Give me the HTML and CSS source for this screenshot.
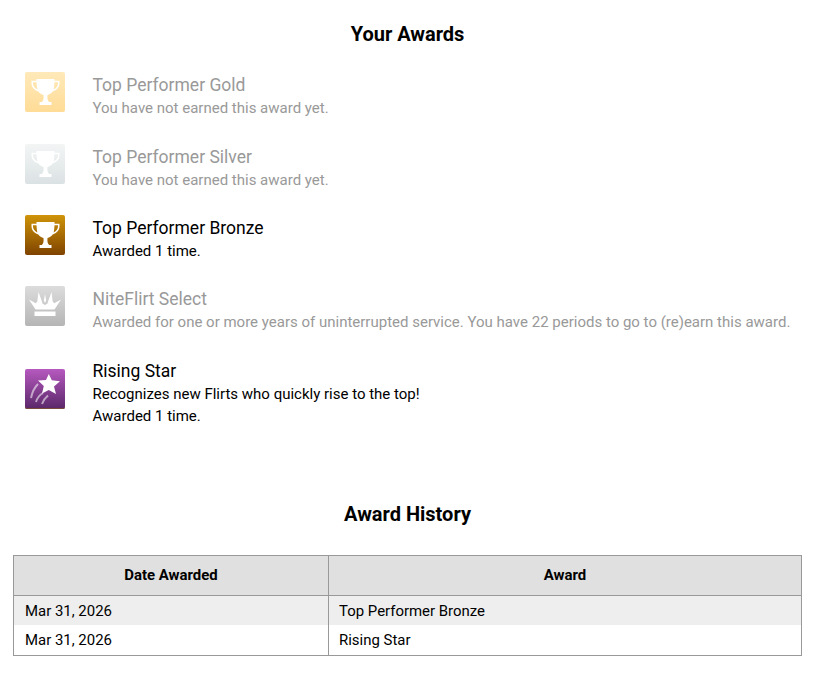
FILE: index.html
```html
<!DOCTYPE html>
<html lang="en">
<head>
<meta charset="utf-8">
<title>Your Awards</title>
<link rel="stylesheet" href="styles.css">
</head>
<body>
<svg class="defs" width="0" height="0" aria-hidden="true">
  <symbol id="trophy" viewBox="0 0 40 40">
    <path fill="#fff" fill-rule="evenodd" d="M11.500 7h18v1.800h5v2.400c0 3.600-2.100 6.300-6.800 8.300-1.400 2-3.200 3-5.200 3.400-.3 3.200 0 5.600 1.700 7.100h2.300v3H14.500v-3h2.300c1.700-1.500 2-3.900 1.700-7.100-2-.4-3.800-1.400-5.200-3.400-4.700-2-6.800-4.700-6.800-8.300V8.800h5zM8 10.300v1c0 2.700 1.500 4.700 4.300 6.200-.4-2.100-.7-4.600-.8-7.200zm25 0h-3.500c-.1 2.600-.4 5.100-.8 7.200 2.800-1.500 4.300-3.500 4.300-6.200z"/>
  </symbol>
  <symbol id="crown" viewBox="0 0 40 40">
    <path fill="#fff" d="M9.500 25.500h21V30h-21zM10.500 23.500 4 13.500l6.800 3.700 1.500-1.700L13.500 6l3.200 8.800.8 2.700L20 19l2.500-1.500.8-2.700L26.500 6l1.200 9.500 1.500 1.700 6.800-3.700-6.500 10zM18.800 14.500 20 8l1.200 6.500-1.200 2.500z"/>
  </symbol>
  <symbol id="star" viewBox="0 0 40 40">
    <path fill="#fff" d="M23.800 5l3 6.300 8.200.9-6 5.300 2 7.500-7.200-3.900-6.800 3.400 1.800-7.500-5.800-5.500 8-.5z"/>
    <path fill="none" stroke="#fff" stroke-opacity=".55" stroke-width="2" d="M6 29c1.200-6 3.500-10.500 7-14M11 33c1.200-4 3.500-7 7-9M17 35c1.200-3.500 3-6 6-8.500"/>
  </symbol>
</svg>
<main class="page">
  <h2 class="heading">Your Awards</h2>
  <ul class="awards">
    <li class="award award-off">
      <span class="badge badge-gold"><svg class="glyph"><use href="#trophy"/></svg></span>
      <div class="info"><div class="name">Top Performer Gold</div><div class="desc">You have not earned this award yet.</div></div>
    </li>
    <li class="award award-off">
      <span class="badge badge-silver"><svg class="glyph"><use href="#trophy"/></svg></span>
      <div class="info"><div class="name">Top Performer Silver</div><div class="desc">You have not earned this award yet.</div></div>
    </li>
    <li class="award">
      <span class="badge badge-bronze"><svg class="glyph"><use href="#trophy"/></svg></span>
      <div class="info"><div class="name">Top Performer Bronze</div><div class="desc">Awarded 1 time.</div></div>
    </li>
    <li class="award award-off">
      <span class="badge badge-select"><svg class="glyph"><use href="#crown"/></svg></span>
      <div class="info"><div class="name">NiteFlirt Select</div><div class="desc">Awarded for one or more years of uninterrupted service. You have 22 periods to go to (re)earn this award.</div></div>
    </li>
    <li class="award">
      <span class="badge badge-star"><svg class="glyph"><use href="#star"/></svg></span>
      <div class="info"><div class="name">Rising Star</div><div class="desc">Recognizes new Flirts who quickly rise to the top!</div><div class="desc">Awarded 1 time.</div></div>
    </li>
  </ul>
  <h2 class="heading heading-history">Award History</h2>
  <table class="history">
    <thead><tr><th class="col-date">Date Awarded</th><th>Award</th></tr></thead>
    <tbody>
      <tr class="row-alt"><td>Mar 31, 2026</td><td>Top Performer Bronze</td></tr>
      <tr><td>Mar 31, 2026</td><td>Rising Star</td></tr>
    </tbody>
  </table>
</main>
</body>
</html>
```
FILE: styles.css
```css
* { box-sizing: border-box; }
html, body { margin: 0; padding: 0; background: #fff; }
body { font-family: Roboto, "Liberation Sans", sans-serif; color: #000; }
.defs { position: absolute; }
.page { width: 815px; padding: 0 13px; }
.heading { margin: 0; padding-top: 22px; height: 46px; line-height: 24px; font-size: 20px; font-weight: 700; text-align: center; }
.heading-history { height: auto; padding-top: 0; margin-bottom: 29px; }
.awards { list-style: none; margin: 26.400px 0 75.100px; padding: 0 0 0 12px; }
.award { display: flex; align-items: center; gap: 27.500px; margin-bottom: 24.330px; }
.award:last-child { margin-bottom: 0; }
.award-off .info { color: #999; }
.badge { flex: none; width: 40px; height: 40px; margin: -2px 0 5px; border-radius: 2px; display: block; }
.glyph { display: block; width: 40px; height: 40px; }
.badge-gold { background: linear-gradient(#ffe9b9, #ffdc97); }
.badge-silver { background: linear-gradient(#f3f5f5, #dbe2e3); }
.badge-bronze { background: linear-gradient(#cf9408, #7f4300); }
.badge-select { background: linear-gradient(#dcdcdc, #b5b5b5); }
.badge-star { background: linear-gradient(#b659bf, #5a2769); box-shadow: inset 0 -1px 0 #7a4a3a; }
.name { font-size: 17.500px; line-height: 24px; padding-top: 1px; }
.desc { font-size: 15px; line-height: 22px; }
.history { width: 789px; border-collapse: collapse; border: 1px solid #999; font-size: 14.950px; }
.history th { height: 40px; padding: 0; background: #e0e0e0; border: 1px solid #999; font-weight: 700; text-align: center; }
.history .col-date { width: 315px; }
.history td { height: 30px; padding: 0 10px 0 11px; }
.history td:first-child { border-right: 1px solid #999; }
.history td:last-child { padding-left: 10px; }
.row-alt td { background: #eee; }
```
